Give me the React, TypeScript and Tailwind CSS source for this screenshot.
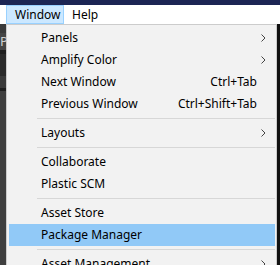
import React from "react";

type Item =
  | { kind: "item"; label: string; shortcut?: string; sub?: boolean; active?: boolean }
  | { kind: "sep" };

const items: Item[] = [
  { kind: "item", label: "Panels", sub: true },
  { kind: "item", label: "Amplify Color", sub: true },
  { kind: "item", label: "Next Window", shortcut: "Ctrl+Tab" },
  { kind: "item", label: "Previous Window", shortcut: "Ctrl+Shift+Tab" },
  { kind: "sep" },
  { kind: "item", label: "Layouts", sub: true },
  { kind: "sep" },
  { kind: "item", label: "Collaborate" },
  { kind: "item", label: "Plastic SCM" },
  { kind: "sep" },
  { kind: "item", label: "Asset Store" },
  { kind: "item", label: "Package Manager", active: true },
  { kind: "sep" },
  { kind: "item", label: "Asset Management", sub: true },
];

function Chevron() {
  return (
    <svg width="5" height="8" viewBox="0 0 5 8" className="absolute right-[9px] top-[7px]">
      <path d="M0.5 0.5 L4 4 L0.5 7.5" fill="none" stroke="#444" strokeWidth="1" />
    </svg>
  );
}

export default function App() {
  return (
    <div
      className="w-[280px] h-[265px] overflow-hidden flex flex-col bg-white text-black"
      style={{ fontFamily: '"Noto Sans", "Noto Sans CJK KR", sans-serif' }}
    >
      <div className="h-[5px] bg-[#1c2554] shrink-0" />
      <div className="h-[19px] flex items-stretch bg-white shrink-0 text-[12px] leading-none">
        <div className="ml-[6px] w-[58px] border border-[#99d1ff] bg-[#cce8ff] flex items-center pl-[8px]">
          Window
        </div>
        <div className="ml-[8px] flex items-center">Help</div>
      </div>
      <div className="flex flex-1 min-h-0">
        <div className="w-[6px] flex flex-col shrink-0 bg-[#3c3c3c]">
          <div className="h-[9px] bg-[#3a3a3a]" />
          <div className="h-[17px] bg-[#454545] text-[#d0d0d0] text-[13px] leading-[17px] overflow-hidden">P</div>
          <div className="h-[4px] bg-[#1e1e1e]" />
          <div className="h-[22px] bg-[#2a2a2a]" />
          <div className="h-[12px] bg-[#3a3a3a]" />
          <div className="h-[3px] bg-[#1e1e1e]" />
          <div className="flex-1 bg-[#3f3f3f]" />
        </div>
        <div className="w-[271px] shrink-0 border border-b-0 border-[#cccccc] bg-[#f2f2f2] pt-[2px] pl-[2px] pr-[1px] text-[12px]">
          {items.map((it, i) =>
            it.kind === "sep" ? (
              <div key={i} className="h-[7px] pt-[3px] pl-[28px]">
                <div className="h-px bg-[#d7d7d7]" />
              </div>
            ) : (
              <div
                key={i}
                className={`relative h-[22px] flex items-center pl-[32px] ${it.active ? "bg-[#91c9f7]" : ""}`}
              >
                <span>{it.label}</span>
                {it.shortcut && <span className="absolute right-[18px]">{it.shortcut}</span>}
                {it.sub && <Chevron />}
              </div>
            )
          )}
        </div>
        <div className="flex-1 bg-[#111111]" />
      </div>
    </div>
  );
}
